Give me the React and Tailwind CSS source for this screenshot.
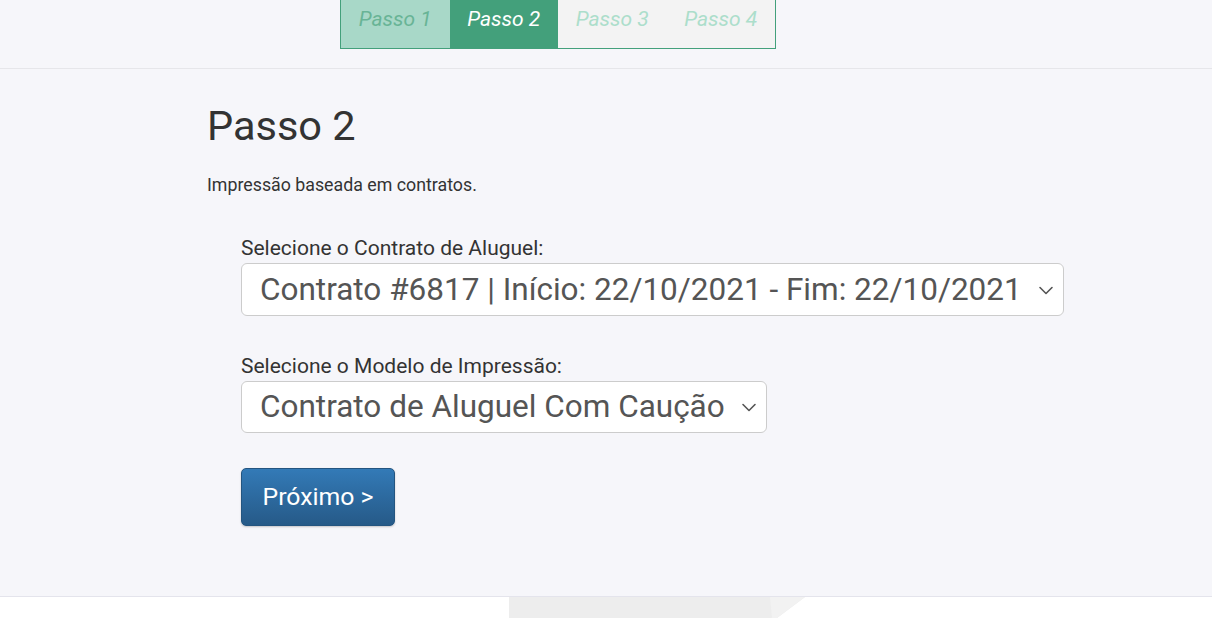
export default function App() {
  const steps = [
    { label: 'Passo 1', cls: 'bg-[#a8d8c8] text-[#68b496]' },
    { label: 'Passo 2', cls: 'bg-[#43a07b] text-white' },
    { label: 'Passo 3', cls: 'bg-[#f3f3f3] text-[#acdecb]' },
    { label: 'Passo 4', cls: 'bg-[#f3f3f3] text-[#acdecb]' },
  ];

  return (
    <div className="min-h-screen bg-white font-['Roboto',sans-serif]">
      {/* Stepper */}
      <div className="h-[69px] bg-[#f6f6fa] border-b border-[#e6e6ea]">
        <div className="ml-[340px] flex w-[436px] h-[49px] border border-t-0 border-[#43a07b]">
          {steps.map((s) => (
            <div
              key={s.label}
              className={`flex-1 flex items-center justify-center italic text-[21px] pb-[9px] ${s.cls}`}
            >
              {s.label}
            </div>
          ))}
        </div>
      </div>

      {/* Main */}
      <div className="h-[528px] bg-[#f6f6fa] border-b border-[#e4e4ec] pl-[207px] pt-[29px]">
        <h1 className="text-[41.5px] leading-[56px] text-[#333]">Passo 2</h1>
        <p className="mt-[17px] text-[17.8px] leading-[27px] text-[#333]">Impressão baseada em contratos.</p>

        <div className="ml-[34px] mt-[38px]">
          <label className="block text-[21px] leading-[24px] text-[#333]">Selecione o Contrato de Aluguel:</label>
          <div className="mt-[3px] flex items-center justify-between w-[823px] h-[53px] bg-white border border-[#cccccc] rounded-[6px] pl-[18px] pr-[8px]">
            <span className="text-[31.5px] text-[#555]">Contrato #6817 | Início: 22/10/2021 - Fim: 22/10/2021</span>
            <Chevron />
          </div>

          <label className="block mt-[38px] text-[21px] leading-[24px] text-[#333]">Selecione o Modelo de Impressão:</label>
          <div className="mt-[3px] flex items-center justify-between w-[526px] h-[52px] bg-white border border-[#cccccc] rounded-[6px] pl-[18px] pr-[8px]">
            <span className="text-[31.5px] text-[#555]">Contrato de Aluguel Com Caução</span>
            <Chevron />
          </div>

          <button className="mt-[35px] w-[154px] h-[58px] rounded-[5px] bg-gradient-to-b from-[#337ab7] to-[#265a88] border border-[#245580] text-white text-[24.8px] shadow-[0_1px_2px_rgba(0,0,0,0.2)]">
            Próximo &gt;
          </button>
        </div>
      </div>

      {/* Footer */}
      <div className="h-[21px] bg-white overflow-hidden">
        <svg width="1212" height="21" viewBox="0 0 1212 21">
          <polygon points="509,0 805,0 777,21 509,21" fill="#ededed" />
          <polygon points="770,0 805,0 777,21 772,21" fill="#f2f2f2" />
        </svg>
      </div>
    </div>
  );
}

function Chevron() {
  return (
    <svg width="18" height="18" viewBox="0 0 18 18" className="shrink-0">
      <path d="M3 6.5l6 6 6-6" fill="none" stroke="#555" strokeWidth="1.6" strokeLinecap="round" strokeLinejoin="round" />
    </svg>
  );
}
